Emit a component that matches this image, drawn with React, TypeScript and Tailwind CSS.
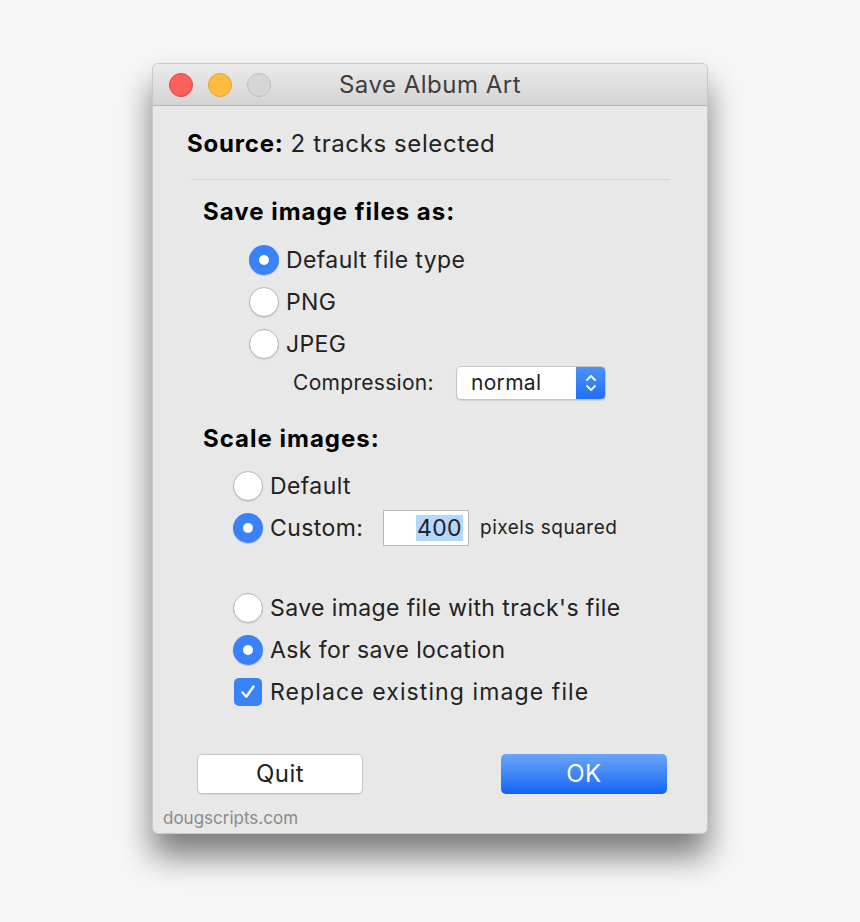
import React from "react";

const font = { fontFamily: "Inter, 'Noto Sans', sans-serif" };

const Radio = ({ on }: { on?: boolean }) =>
  on ? (
    <span className="flex h-[30px] w-[30px] shrink-0 items-center justify-center rounded-full bg-[#3a82f7] shadow-[0_1px_1px_rgba(0,0,0,0.15)]">
      <span className="h-[10px] w-[10px] rounded-full bg-white" />
    </span>
  ) : (
    <span className="h-[30px] w-[30px] shrink-0 rounded-full border border-[#b5b5b5] bg-white shadow-[0_1px_1px_rgba(0,0,0,0.1)]" />
  );

const Check = () => (
  <span className="flex h-[28px] w-[28px] shrink-0 items-center justify-center rounded-[5px] bg-[#3a82f7]">
    <svg width="18" height="18" viewBox="0 0 18 18" fill="none">
      <path d="M3.5 9.5l3.8 4.2L14.5 3.5" stroke="white" strokeWidth="2.4" strokeLinecap="round" strokeLinejoin="round" />
    </svg>
  </span>
);

const Row = ({ children, className = "" }: { children: React.ReactNode; className?: string }) => (
  <div className={`flex h-[42px] items-center gap-[7px] text-[23px] text-[#222] ${className}`}>{children}</div>
);

export default function App() {
  return (
    <div className="min-h-[922px] bg-[#f7f7f7] pl-[152px] pt-[63px]" style={font}>
      <div className="w-[556px] overflow-hidden rounded-[6px] border border-[#c8c8c8] bg-[#e8e8e8] shadow-[0_22px_32px_rgba(0,0,0,0.5)]">
        {/* title bar */}
        <div className="grid h-[42px] grid-cols-[1fr_auto_1fr] items-center border-b border-[#b4b4b4] bg-gradient-to-b from-[#ebebeb] to-[#d4d4d4]">
          <div className="flex items-center gap-[15px] pl-[16px]">
            <span className="h-[24px] w-[24px] rounded-full border border-[#e0443e] bg-[#fc605c]" />
            <span className="h-[24px] w-[24px] rounded-full border border-[#dea236] bg-[#fdbc40]" />
            <span className="h-[24px] w-[24px] rounded-full border border-[#bdbdbd] bg-[#d6d6d6]" />
          </div>
          <div className="text-[24px] tracking-[0.5px] text-[#3e3e3e]">Save Album Art</div>
          <div />
        </div>

        <div className="px-[10px] pb-[4px] pt-[22px]">
          <div className="flex h-8 items-center pl-[24px] text-[24px] tracking-[0.6px] text-[#222]">
            <b className="mr-[7px] tracking-[0.8px] text-black">Source:</b>2 tracks selected
          </div>
          <div className="ml-[28px] mt-[19px] h-px w-[479px] bg-[#d4d4d4]" />

          <div className="mt-[16px] flex h-8 items-center pl-[40px] text-[24px] font-bold tracking-[1px] text-black">Save image files as:</div>
          <div className="mt-[11px] pl-[86px]">
            <Row className="tracking-[0.4px]"><Radio on />Default file type</Row>
            <Row className="tracking-[0.4px]"><Radio />PNG</Row>
            <Row className="tracking-[0.4px]"><Radio />JPEG</Row>
            <div className="flex h-[36px] items-center pl-[44px] text-[21px] tracking-[0.3px] text-[#222]">
              <span className="w-[163px]">Compression:</span>
              <div className="flex h-[34px] w-[150px] overflow-hidden rounded-[5px] border border-[#c4c4c4] bg-white shadow-[0_1px_1px_rgba(0,0,0,0.1)]">
                <span className="flex flex-1 items-center pl-[14px] text-[21px]">normal</span>
                <span className="flex w-[29px] items-center justify-center bg-gradient-to-b from-[#4b92f8] to-[#1f6ff5]">
                  <svg width="14" height="22" viewBox="0 0 14 22" fill="none">
                    <path d="M3 8l4-4 4 4M3 14l4 4 4-4" stroke="white" strokeWidth="1.8" strokeLinecap="round" strokeLinejoin="round" />
                  </svg>
                </span>
              </div>
            </div>
          </div>

          <div className="mt-[22px] flex h-8 items-center pl-[40px] text-[24px] font-bold tracking-[1px] text-black">Scale images:</div>
          <div className="mt-[10px] pl-[70px]">
            <Row className="tracking-[0.4px]"><Radio />Default</Row>
            <Row className="tracking-[0.4px]">
              <Radio on />
              <span className="w-[106px]">Custom:</span>
              <span className="flex h-[36px] w-[86px] items-center justify-end border border-[#b9b9b9] bg-white pr-[5px]">
                <span className="bg-[#b3d7ff] px-px leading-[26px]">400</span>
              </span>
              <span className="ml-[4px] text-[19px] tracking-[0.5px]">pixels squared</span>
            </Row>
          </div>

          <div className="mt-[38px] pl-[70px]">
            <Row className="tracking-[0.4px]"><Radio />Save image file with track's file</Row>
            <Row className="tracking-[0.4px]"><Radio on />Ask for save location</Row>
            <Row className="tracking-[1.1px]"><span className="ml-px mr-px"><Check /></span>Replace existing image file</Row>
          </div>

          <div className="mt-[41px] flex justify-between pl-[34px] pr-[30px]">
            <button className="h-10 w-[166px] rounded-[5px] border border-[#c6c6c6] bg-white text-[24px] tracking-[0.4px] text-[#222] shadow-[0_1px_1px_rgba(0,0,0,0.08)]">Quit</button>
            <button className="h-10 w-[166px] rounded-[5px] bg-gradient-to-b from-[#69a5fa] to-[#0d63f5] text-[24px] tracking-[0.4px] text-white">OK</button>
          </div>

          <div className="mt-[15px] flex h-5 items-center text-[17px] text-[#8a8a8a]">dougscripts.com</div>
        </div>
      </div>
    </div>
  );
}
